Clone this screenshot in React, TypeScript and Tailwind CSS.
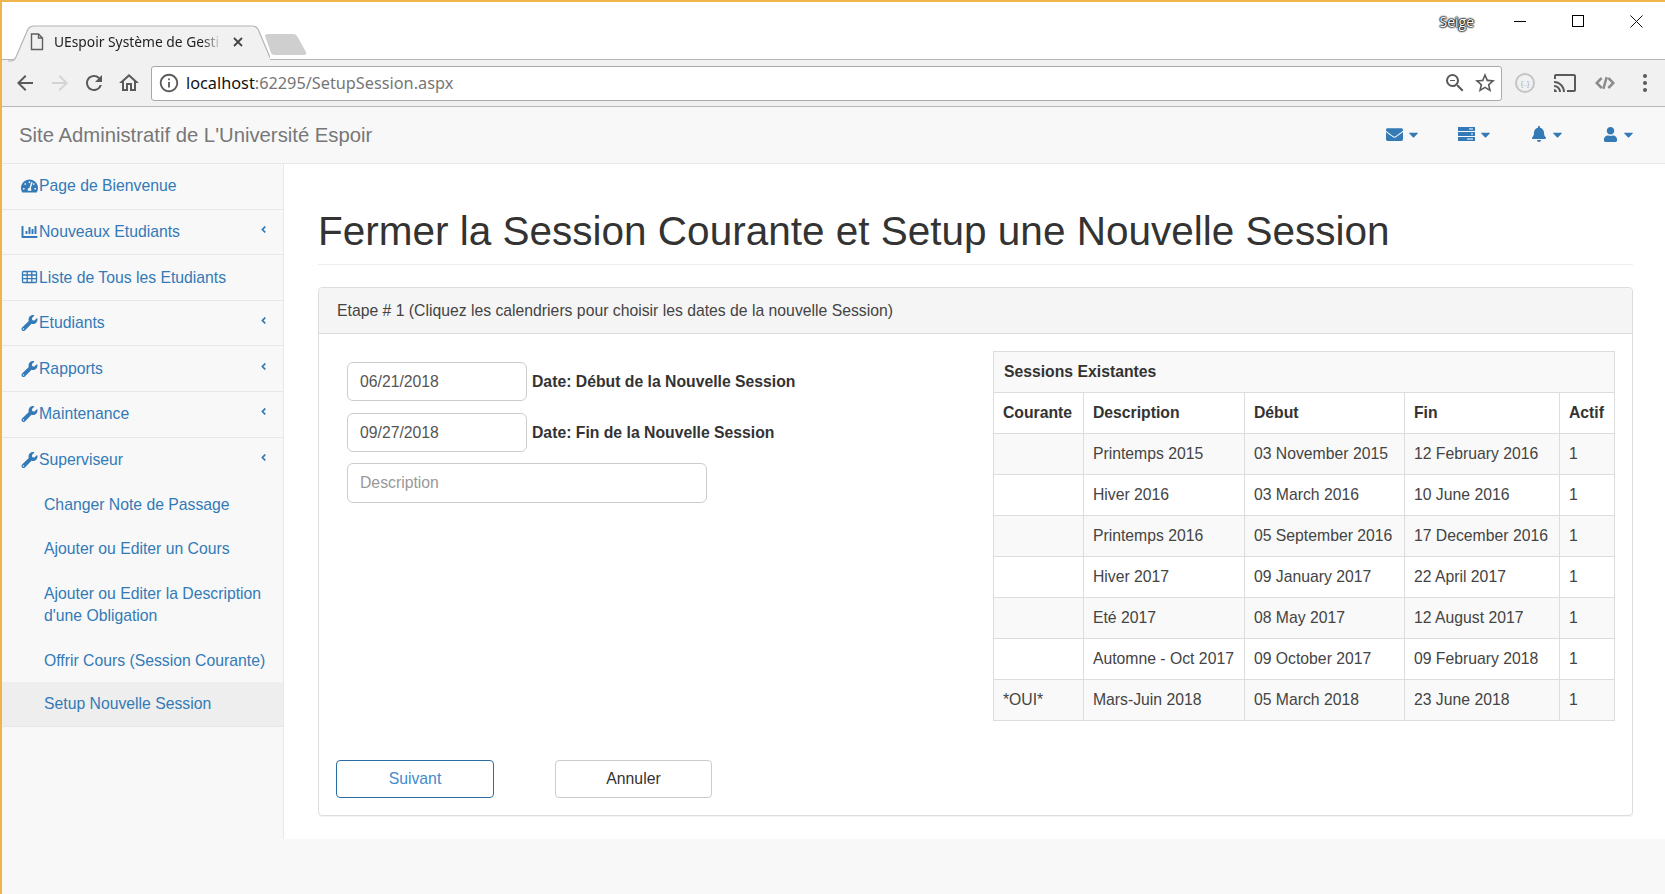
import { FaAngleLeft, FaBell, FaCaretDown, FaChartBar, FaEnvelope, FaTachometerAlt, FaUser, FaWrench } from "react-icons/fa";
import type { ComponentType } from "react";

function TableIcon({ size = 16, className = "" }: { size?: number; className?: string }) {
  return (
    <svg className={className} width={size} height={size} viewBox="0 0 16 16" fill="none" stroke="currentColor" strokeWidth="1.3">
      <rect x="1" y="2.5" width="14" height="11" rx="1" />
      <path d="M1 6 H15 M1 9.7 H15 M5.7 2.5 V13.5 M10.3 2.5 V13.5" />
    </svg>
  );
}

function ServerIcon() {
  return (
    <svg width="17" height="14" viewBox="0 0 17 14" fill="currentColor">
      <rect x="0" y="0" width="17" height="4" />
      <rect x="0" y="5" width="17" height="4" />
      <rect x="0" y="10" width="17" height="4" />
      <path d="M11 1.5 H15 V2.5 H11 Z M13 6.5 H15 V7.5 H13 Z M9 11.5 H15 V12.5 H9 Z" fill="#ffffff" />
    </svg>
  );
}

const sideItems: { label: string; icon: ComponentType<{ size?: number; className?: string }>; arrow: boolean }[] = [
  { label: "Page de Bienvenue", icon: FaTachometerAlt, arrow: false },
  { label: "Nouveaux Etudiants", icon: FaChartBar, arrow: true },
  { label: "Liste de Tous les Etudiants", icon: TableIcon, arrow: false },
  { label: "Etudiants", icon: FaWrench, arrow: true },
  { label: "Rapports", icon: FaWrench, arrow: true },
  { label: "Maintenance", icon: FaWrench, arrow: true },
];

const sessions = [
  ["", "Printemps 2015", "03 November 2015", "12 February 2016", "1"],
  ["", "Hiver 2016", "03 March 2016", "10 June 2016", "1"],
  ["", "Printemps 2016", "05 September 2016", "17 December 2016", "1"],
  ["", "Hiver 2017", "09 January 2017", "22 April 2017", "1"],
  ["", "Eté 2017", "08 May 2017", "12 August 2017", "1"],
  ["", "Automne - Oct 2017", "09 October 2017", "09 February 2018", "1"],
  ["*OUI*", "Mars-Juin 2018", "05 March 2018", "23 June 2018", "1"],
];

function Glyph({ d, size = 24, color = "#5a5a5a" }: { d: string; size?: number; color?: string }) {
  return (
    <svg width={size} height={size} viewBox="0 0 24 24" fill={color}>
      <path d={d} />
    </svg>
  );
}

function TabStrip() {
  return (
    <div className="relative h-[58px] bg-white border-b border-[#b4b4b4]">
      <svg className="absolute left-[6px] top-[23px]" width="262" height="37" viewBox="0 0 262 37">
        <path d="M0 36 H3 Q6 36 8 32 L20 4 Q22 1 26 1 H244 Q248 1 250 4 L261 30 Q263 36 268 36" fill="#f1f1f1" stroke="#b4b4b4" strokeWidth="1.2" />
      </svg>
      <svg className="absolute left-[261px] top-[31px]" width="46" height="24" viewBox="0 0 46 24">
        <path d="M2 3 Q2 1 5 1 H30 Q33 1 34 3 L43 19 Q44 22 41 22 H12 Q9 22 8 20 Z" fill="#cfcfcf" />
      </svg>
      <div className="absolute left-[28px] top-[30px] flex items-center">
        <svg width="14" height="18" viewBox="0 0 14 18" fill="none" stroke="#5f5f5f" strokeWidth="1.4">
          <path d="M1.5 1 H8.5 L12.5 5 V16.5 H1.5 Z M8.5 1 V5 H12.5" />
        </svg>
        <div className="ml-[10px] w-[168px] whitespace-nowrap font-['Noto_Sans',sans-serif] text-[13.8px] leading-[20px] text-[#222] [mask-image:linear-gradient(to_right,black_88%,transparent)]">
          UEspoir Système de Gesti
        </div>
        <svg className="ml-[11px]" width="10" height="10" viewBox="0 0 10 10" stroke="#444" strokeWidth="1.8">
          <path d="M1 1 L9 9 M9 1 L1 9" />
        </svg>
      </div>
      <div className="absolute right-[0px] top-[4px] flex h-[30px] items-center">
        <span className="mr-[17px] font-['Open_Sans',sans-serif] text-[14px] text-white [text-shadow:0_0_1px_#111,0_0_1px_#111,0_0_2px_#111,0_0_2px_#111,0_0_2px_#111]">Seige</span>
        <div className="flex w-[58px] justify-center">
          <div className="h-[1px] w-[12px] bg-black" />
        </div>
        <div className="flex w-[58px] justify-center">
          <div className="h-[12px] w-[12px] border border-black" />
        </div>
        <div className="flex w-[58px] justify-center">
          <svg width="13" height="13" viewBox="0 0 13 13" stroke="#111" strokeWidth="1">
            <path d="M0.5 0.5 L12.5 12.5 M12.5 0.5 L0.5 12.5" />
          </svg>
        </div>
      </div>
    </div>
  );
}

function Toolbar() {
  return (
    <div className="flex h-[47px] items-center border-b border-[#b8b8b8] bg-[#f1f1f1]">
      <div className="ml-[9px] flex w-[28px] justify-center">
        <Glyph d="M20 11H7.83l5.59-5.59L12 4l-8 8 8 8 1.41-1.41L7.83 13H20v-2z" />
      </div>
      <div className="ml-[7px] flex w-[28px] justify-center">
        <Glyph color="#d4d4d4" d="M4 11h12.17l-5.59-5.59L12 4l8 8-8 8-1.41-1.41L16.17 13H4v-2z" />
      </div>
      <div className="ml-[6px] flex w-[28px] justify-center">
        <Glyph d="M17.65 6.35A7.958 7.958 0 0 0 12 4c-4.42 0-7.99 3.58-7.99 8s3.57 8 7.99 8c3.73 0 6.84-2.55 7.73-6h-2.08A5.99 5.99 0 0 1 12 18c-3.31 0-6-2.69-6-6s2.69-6 6-6c1.66 0 3.14.69 4.22 1.78L13 11h7V4l-2.35 2.35z" />
      </div>
      <div className="ml-[7px] flex w-[28px] justify-center">
        <Glyph d="M12 5.69l5 4.5V18h-2v-6H9v6H7v-7.81l5-4.5M12 3L2 12h3v8h6v-6h2v6h6v-8h3L12 3z" />
      </div>
      <div className="ml-[8px] flex h-[35px] w-[1351px] items-center rounded-[3px] border border-[#a9a9a9] bg-white pl-[6px]">
        <Glyph size={22} d="M11 7h2v2h-2zm0 4h2v6h-2zm1-9C6.48 2 2 6.48 2 12s4.48 10 10 10 10-4.48 10-10S17.52 2 12 2zm0 18c-4.41 0-8-3.59-8-8s3.59-8 8-8 8 3.59 8 8-3.59 8-8 8z" />
        <span className="ml-[6px] flex-1 font-['Noto_Sans',sans-serif] text-[16.3px] text-[#111]">
          localhost<span className="text-[#767676]">:62295/SetupSession.aspx</span>
        </span>
        <div className="mr-[4px]">
          <Glyph size={24} d="M15.5 14h-.79l-.28-.27A6.47 6.47 0 0 0 16 9.5 6.5 6.5 0 1 0 9.5 16c1.61 0 3.09-.59 4.23-1.57l.27.28v.79l5 4.99L20.49 19l-4.99-5zm-6 0C7.01 14 5 11.99 5 9.5S7.01 5 9.5 5 14 7.01 14 9.5 11.99 14 9.5 14zM7 9h5v1H7z" />
        </div>
        <div className="mr-[4px] ml-[2px]">
          <Glyph size={24} d="M22 9.24l-7.19-.62L12 2 9.19 8.63 2 9.24l5.46 4.73L5.82 21 12 17.27 18.18 21l-1.63-7.03L22 9.24zM12 15.4l-3.76 2.27 1-4.28-3.32-2.88 4.38-.38L12 6.1l1.71 4.04 4.38.38-3.32 2.88 1 4.28L12 15.4z" />
        </div>
      </div>
      <div className="ml-[13px] flex h-[20px] w-[20px] items-center justify-center rounded-full border-2 border-[#c4c4c4] text-[7px] leading-none text-[#aaa]">
        {"{..}"}
      </div>
      <div className="ml-[18px]">
        <Glyph size={24} d="M21 3H3c-1.1 0-2 .9-2 2v3h2V5h18v14h-7v2h7c1.1 0 2-.9 2-2V5c0-1.1-.9-2-2-2zM1 18v3h3c0-1.66-1.34-3-3-3zm0-4v2c2.76 0 5 2.24 5 5h2c0-3.87-3.13-7-7-7zm0-4v2c4.97 0 9 4.03 9 9h2c0-6.08-4.93-11-11-11z" />
      </div>
      <div className="ml-[18px]">
        <svg width="20" height="20" viewBox="0 0 24 24" fill="none" stroke="#8c8c8c" strokeWidth="3">
          <path d="M8 6 L2 12 L8 18 M16 6 L22 12 L16 18 M14 5 L10 19" />
        </svg>
      </div>
      <div className="ml-[28px] flex flex-col gap-[3px]">
        <div className="h-[4px] w-[4px] rounded-full bg-[#5a5a5a]" />
        <div className="h-[4px] w-[4px] rounded-full bg-[#5a5a5a]" />
        <div className="h-[4px] w-[4px] rounded-full bg-[#5a5a5a]" />
      </div>
    </div>
  );
}

function Navbar() {
  return (
    <div className="flex h-[57px] items-center border-b border-[#e7e7e7] bg-[#f8f8f8] pl-[17px] text-[#337ab7]">
      <span className="flex-1 text-[20.3px] text-[#777]">Site Administratif de L'Université Espoir</span>
      <div className="mb-[2px] flex w-[72px] items-center">
        <FaEnvelope size={17} />
        <FaCaretDown size={15} className="ml-[3px]" />
      </div>
      <div className="mb-[2px] flex w-[73px] items-center">
        <ServerIcon />
        <FaCaretDown size={15} className="ml-[3px]" />
      </div>
      <div className="mb-[2px] flex w-[72px] items-center">
        <FaBell size={16} />
        <FaCaretDown size={15} className="ml-[3px]" />
      </div>
      <div className="mb-[2px] flex w-[62px] items-center">
        <FaUser size={15} />
        <FaCaretDown size={15} className="ml-[3px]" />
      </div>
    </div>
  );
}

function Sidebar() {
  return (
    <div className="h-[675px] w-[282px] shrink-0 border-r border-[#e7e7e7] text-[15.75px] text-[#337ab7]">
      {sideItems.map((item) => (
        <div key={item.label} className="flex h-[45.6px] items-center border-b border-[#e7e7e7] pl-[19px] pr-[14px]">
          <item.icon size={16} className="mr-[1px] w-[17px]" />
          <span className="flex-1">{item.label}</span>
          {item.arrow && <FaAngleLeft size={11} className="mt-[-5px]" />}
        </div>
      ))}
      <div className="flex h-[45px] items-center pl-[19px] pr-[14px]">
        <FaWrench size={16} className="mr-[1px] w-[17px]" />
        <span className="flex-1">Superviseur</span>
        <FaAngleLeft size={11} className="mt-[-5px]" />
      </div>
      <div className="flex h-[44px] items-center pl-[42px]">Changer Note de Passage</div>
      <div className="flex h-[44px] items-center pl-[42px]">Ajouter ou Editer un Cours</div>
      <div className="flex h-[69px] items-center pl-[42px] pr-[15px] leading-[22px]">
        Ajouter ou Editer la Description d'une Obligation
      </div>
      <div className="flex h-[42px] items-center pl-[42px]">Offrir Cours (Session Courante)</div>
      <div className="flex h-[45px] items-center border-b border-[#e7e7e7] bg-[#eeeeee] pl-[42px]">Setup Nouvelle Session</div>
    </div>
  );
}

function SessionsTable() {
  return (
    <table className="w-[621px] table-fixed border-collapse border border-[#ddd] text-[15.75px] text-[#444]">
      <colgroup>
        <col className="w-[90px]" />
        <col className="w-[161px]" />
        <col className="w-[160px]" />
        <col className="w-[155px]" />
        <col className="w-[55px]" />
      </colgroup>
      <thead className="text-[#333]">
        <tr className="h-[41px] bg-[#f9f9f9]">
          <th colSpan={5} className="border border-[#ddd] pl-[10px] text-left font-bold">Sessions Existantes</th>
        </tr>
        <tr className="h-[41px] bg-white text-left">
          {["Courante", "Description", "Début", "Fin", "Actif"].map((h) => (
            <th key={h} className="border border-[#ddd] px-[9px] font-bold whitespace-nowrap">{h}</th>
          ))}
        </tr>
      </thead>
      <tbody>
        {sessions.map((row, i) => (
          <tr key={row[1]} className={`h-[41px] ${i % 2 === 0 ? "bg-[#f9f9f9]" : "bg-white"}`}>
            {row.map((cell, j) => (
              <td key={j} className="border border-[#ddd] px-[9px] whitespace-nowrap">{cell}</td>
            ))}
          </tr>
        ))}
      </tbody>
    </table>
  );
}

function Main() {
  return (
    <div className="h-[675px] flex-1 bg-white pl-[34px] pr-[32px] text-[15.75px] text-[#333]">
      <h1 className="mt-[39px] border-b border-[#eee] pb-[5px] text-[40.5px] leading-[56px] text-[#333]">
        Fermer la Session Courante et Setup une Nouvelle Session
      </h1>
      <div className="mt-[22px] h-[529px] rounded-[4px] border border-[#ddd] shadow-[0_1px_1px_rgba(0,0,0,0.05)]">
        <div className="flex h-[46px] items-center rounded-t-[4px] border-b border-[#ddd] bg-[#f5f5f5] pl-[18px] text-[#444]">
          Etape # 1 (Cliquez les calendriers pour choisir les dates de la nouvelle Session)
        </div>
        <div className="flex justify-between pl-[28px] pr-[17px] pt-[17px]">
          <div className="flex flex-col pt-[11px]">
            <div className="flex items-center">
              <input readOnly value="06/21/2018" className="h-[39px] w-[180px] rounded-[6px] border border-[#ccc] px-[12px] text-[#555]" />
              <b className="ml-[5px]">Date: Début de la Nouvelle Session</b>
            </div>
            <div className="mt-[12px] flex items-center">
              <input readOnly value="09/27/2018" className="h-[39px] w-[180px] rounded-[6px] border border-[#ccc] px-[12px] text-[#555]" />
              <b className="ml-[5px]">Date: Fin de la Nouvelle Session</b>
            </div>
            <input readOnly placeholder="Description" className="mt-[11px] h-[40px] w-[360px] rounded-[6px] border border-[#ccc] px-[12px] placeholder:text-[#999]" />
          </div>
          <SessionsTable />
        </div>
        <div className="mt-[39px] flex pl-[17px]">
          <button type="button" className="h-[38px] w-[158px] rounded-[4px] border border-[#2e6da4] bg-white text-[#428bca]">Suivant</button>
          <button type="button" className="ml-[61px] h-[38px] w-[157px] rounded-[4px] border border-[#ccc] bg-white text-[#333]">Annuler</button>
        </div>
      </div>
    </div>
  );
}

export default function App() {
  return (
    <div className="h-[894px] overflow-hidden border-t-2 border-l-2 border-[#f0b44c] bg-[#f8f8f8] font-['Liberation_Sans',Arial,sans-serif]">
      <TabStrip />
      <Toolbar />
      <Navbar />
      <div className="flex">
        <Sidebar />
        <Main />
      </div>
    </div>
  );
}
